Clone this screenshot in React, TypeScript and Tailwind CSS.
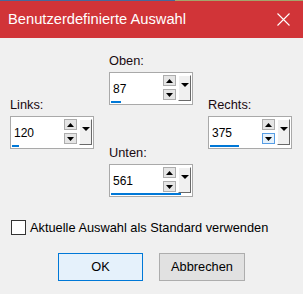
import React from "react";

const font = { fontFamily: '"Liberation Sans", Arial, sans-serif' };

function Tri({ up }: { up?: boolean }) {
  return (
    <svg width="7" height="4" viewBox="0 0 7 4" className="block">
      {up ? <polygon points="0,4 7,4 3.5,0" fill="#000" /> : <polygon points="0,0 7,0 3.5,4" fill="#000" />}
    </svg>
  );
}

function Spin({ value, bar, hoverDown }: { value: string; bar: number; hoverDown?: boolean }) {
  return (
    <div className="w-[84px] h-[33px] border border-[#a9a9a9] bg-white flex flex-col">
      <div className="flex h-[28px] pt-[2px] items-start">
        <div className="flex-1 h-[26px] flex items-center pl-[3px] pt-[2px] text-[12px] text-black">{value}</div>
        <div className="flex flex-col gap-[3px] w-[13px]">
          <div className="h-[11px] border border-[#adadad] bg-[#e5e5e5] flex items-center justify-center">
            <svg width="7" height="4" viewBox="0 0 7 4" className="block"><polygon points="0,4 7,4 3.5,0" fill="#000" /></svg>
          </div>
          <div className={"h-[11px] border flex items-center justify-center " + (hoverDown ? "border-[#569de5] bg-[#e5f1fb]" : "border-[#adadad] bg-[#e5e5e5]")}>
            <svg width="7" height="4" viewBox="0 0 7 4" className="block"><polygon points="0,0 7,0 3.5,4" fill="#000" /></svg>
          </div>
        </div>
        <div className="ml-[2px] mr-[1px] w-[13px] h-[26px] bg-[#f0f0f0] border-l border-t border-l-white border-t-white border-r border-b border-r-[#696969] border-b-[#696969] flex justify-center pt-[7px]">
          <svg width="8" height="4" viewBox="0 0 8 4" className="block"><polygon points="0,0 8,0 4,4" fill="#000" /></svg>
        </div>
      </div>
      <div className="h-[2px] ml-[1px] bg-[#0078d7]" style={{ width: bar }} />
    </div>
  );
}

function Label({ children }: { children: React.ReactNode }) {
  return <div className="h-[16px] leading-[16px] text-[12.8px] text-[#1a0a10] mb-[3px]">{children}</div>;
}

export default function App() {
  return (
    <div className="w-[303px] h-[294px] bg-[#f0f0f0] overflow-hidden" style={font}>
      <div className="flex h-[1px]">
        <div className="w-[175px] bg-[#46699a]" />
        <div className="flex-1 bg-[#a3a56c]" />
      </div>
      <div className="h-[37px] bg-[#d13438] flex items-center justify-between pl-[8px] pr-[13px]">
        <span className="text-white text-[14.7px]">Benutzerdefinierte Auswahl</span>
        <svg width="13" height="13" viewBox="0 0 13 13" className="block">
          <path d="M0.5 0.5 L12.5 12.5 M12.5 0.5 L0.5 12.5" stroke="#fff" strokeWidth="1.1" />
        </svg>
      </div>
      <div className="flex pl-[10px] gap-[15px]">
        <div className="pt-[59px]">
          <Label>Links:</Label>
          <Spin value="120" bar={7} />
        </div>
        <div className="pt-[15px]">
          <Label>Oben:</Label>
          <Spin value="87" bar={10} />
          <div className="h-[40px]" />
          <Label>Unten:</Label>
          <Spin value="561" bar={70} />
        </div>
        <div className="pt-[59px]">
          <Label>Rechts:</Label>
          <Spin value="375" bar={29} hoverDown />
        </div>
      </div>
      <div className="flex items-center h-[15px] mt-[23px] pl-[11px] gap-[4px]">
        <div className="w-[15px] h-[15px] border border-[#333] bg-white" />
        <span className="text-[12.8px] text-black leading-[15px]">Aktuelle Auswahl als Standard verwenden</span>
      </div>
      <div className="flex justify-center gap-[16px] mt-[18px]">
        <div className="w-[85px] h-[28px] border border-[#0078d7] bg-[#e5f1fb] flex items-center justify-center text-[12.8px] text-black">OK</div>
        <div className="w-[86px] h-[28px] border border-[#adadad] bg-[#e1e1e1] flex items-center justify-center text-[12.8px] text-black">Abbrechen</div>
      </div>
    </div>
  );
}
